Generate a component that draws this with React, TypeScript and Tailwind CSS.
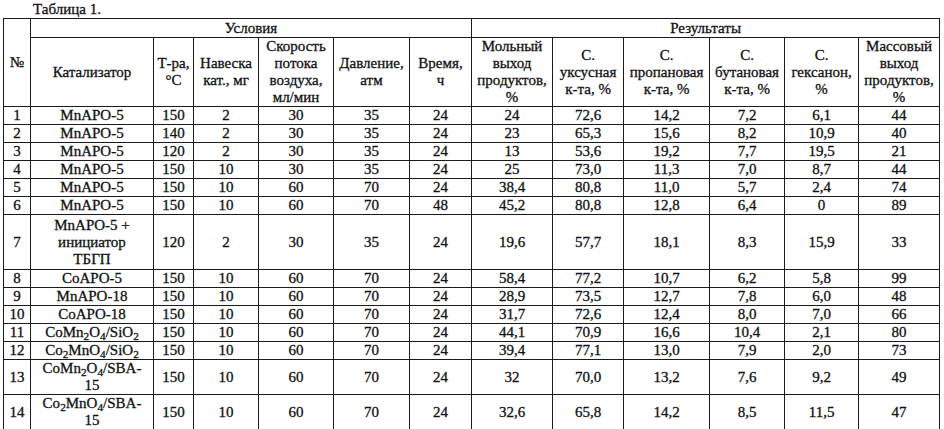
import type { ReactNode } from "react";

const COLS = [27, 123, 40, 65, 75, 76, 62, 81, 71, 86, 75, 74, 81];

type Row = {
  n: number;
  cat: ReactNode;
  h?: string;
  vals: string[];
};

const ROWS: Row[] = [
  { n: 1, cat: "MnAPO-5", vals: ["150", "2", "30", "35", "24", "24", "72,6", "14,2", "7,2", "6,1", "44"] },
  { n: 2, cat: "MnAPO-5", vals: ["140", "2", "30", "35", "24", "23", "65,3", "15,6", "8,2", "10,9", "40"] },
  { n: 3, cat: "MnAPO-5", vals: ["120", "2", "30", "35", "24", "13", "53,6", "19,2", "7,7", "19,5", "21"] },
  { n: 4, cat: "MnAPO-5", vals: ["150", "10", "30", "35", "24", "25", "73,0", "11,3", "7,0", "8,7", "44"] },
  { n: 5, cat: "MnAPO-5", vals: ["150", "10", "60", "70", "24", "38,4", "80,8", "11,0", "5,7", "2,4", "74"] },
  { n: 6, cat: "MnAPO-5", vals: ["150", "10", "60", "70", "48", "45,2", "80,8", "12,8", "6,4", "0", "89"] },
  {
    n: 7,
    h: "h-[55px]",
    cat: (
      <>
        MnAPO-5 +<br />
        инициатор
        <br />
        ТБГП
      </>
    ),
    vals: ["120", "2", "30", "35", "24", "19,6", "57,7", "18,1", "8,3", "15,9", "33"],
  },
  { n: 8, cat: "CoAPO-5", vals: ["150", "10", "60", "70", "24", "58,4", "77,2", "10,7", "6,2", "5,8", "99"] },
  { n: 9, cat: "MnAPO-18", vals: ["150", "10", "60", "70", "24", "28,9", "73,5", "12,7", "7,8", "6,0", "48"] },
  { n: 10, cat: "CoAPO-18", vals: ["150", "10", "60", "70", "24", "31,7", "72,6", "12,4", "8,0", "7,0", "66"] },
  {
    n: 11,
    cat: (
      <>
        CoMn<sub>2</sub>O<sub>4</sub>/SiO<sub>2</sub>
      </>
    ),
    vals: ["150", "10", "60", "70", "24", "44,1", "70,9", "16,6", "10,4", "2,1", "80"],
  },
  {
    n: 12,
    cat: (
      <>
        Co<sub>2</sub>MnO<sub>4</sub>/SiO<sub>2</sub>
      </>
    ),
    vals: ["150", "10", "60", "70", "24", "39,4", "77,1", "13,0", "7,9", "2,0", "73"],
  },
  {
    n: 13,
    h: "h-[34px]",
    cat: (
      <>
        CoMn<sub>2</sub>O<sub>4</sub>/SBA-
        <br />
        15
      </>
    ),
    vals: ["150", "10", "60", "70", "24", "32", "70,0", "13,2", "7,6", "9,2", "49"],
  },
  {
    n: 14,
    h: "h-[35px]",
    cat: (
      <>
        Co<sub>2</sub>MnO<sub>4</sub>/SBA-
        <br />
        15
      </>
    ),
    vals: ["150", "10", "60", "70", "24", "32,6", "65,8", "14,2", "8,5", "11,5", "47"],
  },
];

const HEAD: ReactNode[] = [
  "Катализатор",
  <>Т-ра,<br />°С</>,
  <>Навеска<br />кат., мг</>,
  <>Скорость<br />потока<br />воздуха,<br />мл/мин</>,
  <>Давление,<br />атм</>,
  <>Время,<br />ч</>,
  <>Мольный<br />выход<br />продуктов,<br />%</>,
  <>С.<br />уксусная<br />к-та, %</>,
  <>С.<br />пропановая<br />к-та, %</>,
  <>С.<br />бутановая<br />к-та, %</>,
  <>С.<br />гексанон,<br />%</>,
  <>Массовый<br />выход<br />продуктов,<br />%</>,
];

const cell = "border border-[#1a1a1a] p-0 text-center align-middle font-normal whitespace-nowrap";

export default function App() {
  return (
    <div className="h-[429px] w-[944px] overflow-hidden bg-white text-[#111] [font-family:'Liberation_Serif',serif] [-webkit-text-stroke:0.3px_#111]">
      <div className="h-[18px] pl-[33px] pt-[1px] text-[15px] leading-[17px]">Таблица 1.</div>
      <table className="ml-[3px] w-[936px] table-fixed border-collapse text-[15px] leading-[17px]">
        <colgroup>
          {COLS.map((w, i) => (
            <col key={i} style={{ width: w }} />
          ))}
        </colgroup>
        <thead>
          <tr className="h-[19px]">
            <th rowSpan={2} className={cell}>
              №
            </th>
            <th colSpan={6} className={cell}>
              Условия
            </th>
            <th colSpan={6} className={cell}>
              Результаты
            </th>
          </tr>
          <tr className="h-[68px]">
            {HEAD.map((h, i) => (
              <th key={i} className={cell}>
                {h}
              </th>
            ))}
          </tr>
        </thead>
        <tbody>
          {ROWS.map((r) => (
            <tr key={r.n} className={r.h ?? "h-[18px]"}>
              <td className={cell}>{r.n}</td>
              <td className={cell}>{r.cat}</td>
              {r.vals.map((v, i) => (
                <td key={i} className={cell}>
                  {v}
                </td>
              ))}
            </tr>
          ))}
        </tbody>
      </table>
    </div>
  );
}
